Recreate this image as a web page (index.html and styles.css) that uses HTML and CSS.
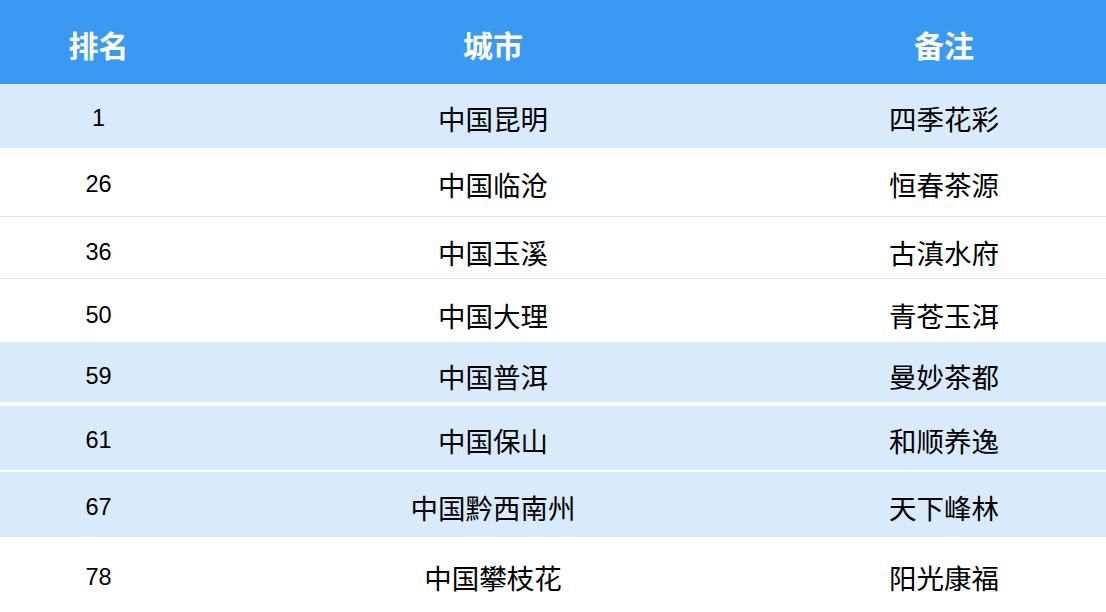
FILE: index.html
```html
<!DOCTYPE html>
<html lang="zh-CN">
<head>
<meta charset="utf-8">
<title>城市排名</title>
<link rel="stylesheet" href="styles.css">
</head>
<body>
<div class="table">
  <div class="row head h84"><div class="c1">排名</div><div class="c2">城市</div><div class="c3">备注</div></div>
  <div class="row blue h64"><div class="c1 num">1</div><div class="c2">中国昆明</div><div class="c3">四季花彩</div></div>
  <div class="row line h69"><div class="c1 num">26</div><div class="c2">中国临沧</div><div class="c3">恒春茶源</div></div>
  <div class="row line h62 low"><div class="c1 num">36</div><div class="c2">中国玉溪</div><div class="c3">古滇水府</div></div>
  <div class="row h63 low"><div class="c1 num">50</div><div class="c2">中国大理</div><div class="c3">青苍玉洱</div></div>
  <div class="row blue gap4 h64 low"><div class="c1 num">59</div><div class="c2">中国普洱</div><div class="c3">曼妙茶都</div></div>
  <div class="row blue gap2 h66"><div class="c1 num">61</div><div class="c2">中国保山</div><div class="c3">和顺养逸</div></div>
  <div class="row blue h65"><div class="c1 num">67</div><div class="c2">中国黔西南州</div><div class="c3">天下峰林</div></div>
  <div class="row h75"><div class="c1 num">78</div><div class="c2">中国攀枝花</div><div class="c3">阳光康福</div></div>
</div>
</body>
</html>
```
FILE: styles.css
```css
html, body {
  margin: 0;
  padding: 0;
  background: #ffffff;
}
body {
  width: 1106px;
  height: 612px;
  overflow: hidden;
  font-family: "Noto Sans CJK SC", "Liberation Sans", sans-serif;
  color: #000000;
}
.table {
  display: flex;
  flex-direction: column;
}
.row {
  display: grid;
  grid-template-columns: 197px 592px 310px;
  align-items: center;
  box-sizing: border-box;
  font-size: 27.5px;
  line-height: 1;
  padding-top: 6px;
}
.row.low { padding-top: 10px; }
.row > div {
  text-align: center;
}
.head {
  background: #3a9af3;
  color: #ffffff;
  font-weight: 700;
  font-size: 30px;
  padding-top: 4px;
}
.blue { background: #d8eafb; }
.line { border-bottom: 1px solid #e1e4e8; }
.gap4 { border-bottom: 4px solid #ffffff; }
.gap2 { border-bottom: 2px solid #ffffff; }
.num {
  font-family: "Liberation Sans", sans-serif;
  font-size: 23.5px;
}
.h84 { height: 84px; }
.h64 { height: 64px; }
.h69 { height: 69px; }
.h62 { height: 62px; }
.h63 { height: 63px; }
.h66 { height: 66px; }
.h65 { height: 65px; }
.h75 { height: 75px; }
```
